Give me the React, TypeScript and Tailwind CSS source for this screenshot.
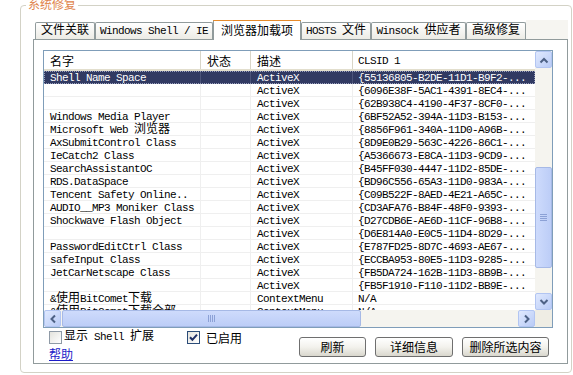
import React from "react";

const mono = "font-['Liberation_Mono','Noto_Sans_CJK_SC',monospace] text-[11px] tracking-[-0.6px]";
const cjk = "font-['Noto_Sans_CJK_SC',sans-serif] text-[12px] tracking-normal";

// 名字 / 描述 / CLSID
const rows: [string, string, string][] = [
  ["Shell Name Space", "ActiveX", "{55136805-B2DE-11D1-B9F2-..."],
  ["", "ActiveX", "{6096E38F-5AC1-4391-8EC4-..."],
  ["", "ActiveX", "{62B938C4-4190-4F37-8CF0-..."],
  ["Windows Media Player", "ActiveX", "{6BF52A52-394A-11D3-B153-..."],
  ["Microsoft Web 浏览器", "ActiveX", "{8856F961-340A-11D0-A96B-..."],
  ["AxSubmitControl Class", "ActiveX", "{8D9E0B29-563C-4226-86C1-..."],
  ["IeCatch2 Class", "ActiveX", "{A5366673-E8CA-11D3-9CD9-..."],
  ["SearchAssistantOC", "ActiveX", "{B45FF030-4447-11D2-85DE-..."],
  ["RDS.DataSpace", "ActiveX", "{BD96C556-65A3-11D0-983A-..."],
  ["Tencent Safety Online..", "ActiveX", "{C09B522F-8AED-4E21-A65C-..."],
  ["AUDIO__MP3 Moniker Class", "ActiveX", "{CD3AFA76-B84F-48F0-9393-..."],
  ["Shockwave Flash Object", "ActiveX", "{D27CDB6E-AE6D-11CF-96B8-..."],
  ["", "ActiveX", "{D6E814A0-E0C5-11D4-8D29-..."],
  ["PasswordEditCtrl Class", "ActiveX", "{E787FD25-8D7C-4693-AE67-..."],
  ["safeInput Class", "ActiveX", "{ECCBA953-80E5-11D3-9285-..."],
  ["JetCarNetscape Class", "ActiveX", "{FB5DA724-162B-11D3-8B9B-..."],
  ["", "ActiveX", "{FB5F1910-F110-11D2-BB9E-..."],
  ["&使用BitComet下载", "ContextMenu", "N/A"],
  ["&使用BitComet下载全部", "ContextMenu", "N/A"],
];

const tabs = [
  { label: "文件关联", w: "w-[60px]" },
  { label: "Windows Shell / IE", w: "w-[118px]" },
  { label: "浏览器加载项", w: "w-[88px]", active: true },
  { label: "HOSTS 文件", w: "w-[70px]" },
  { label: "Winsock 供应者", w: "w-[95px]" },
  { label: "高级修复", w: "w-[60px]" },
];

// 中文部分用 12px 字体，其余等宽
function Mixed({ text }: { text: string }) {
  const parts = text.split(/([\u3000-\u9fff\uff00-\uffef]+)/);
  return (
    <span className="whitespace-pre">
      {parts.map((p, i) =>
        i % 2 === 1 ? (
          <span key={i} className={`${cjk} leading-[8px]`}>
            {p}
          </span>
        ) : (
          <span key={i}>{p}</span>
        )
      )}
    </span>
  );
}

function Arrow({ dir }: { dir: "up" | "down" | "left" | "right" }) {
  const vert = dir === "up" || dir === "down";
  const d = {
    up: "M1.5 6.5 L5 3 L8.5 6.5",
    down: "M1.5 2 L5 5.5 L8.5 2",
    left: "M6 1.5 L2.5 5 L6 8.5",
    right: "M2 1.5 L5.5 5 L2 8.5",
  }[dir];
  return (
    <svg width={vert ? 10 : 8} height={vert ? 8 : 10} viewBox={vert ? "0 0 10 8" : "0 0 8 10"}>
      <path d={d} fill="none" stroke="#4D6185" strokeWidth="2" />
    </svg>
  );
}

function ScrollBtn({ dir }: { dir: "up" | "down" | "left" | "right" }) {
  return (
    <div className="w-[17px] h-[17px] shrink-0 rounded-[2px] border border-[#B2C5F2] bg-linear-to-br from-[#E0E9FE] to-[#B9CBF6] flex items-center justify-center">
      <Arrow dir={dir} />
    </div>
  );
}

function Checkbox({ checked }: { checked?: boolean }) {
  return (
    <div
      className={
        checked
          ? "w-[13px] h-[13px] shrink-0 border border-[#2B4C78] bg-linear-to-br from-[#E4E3DD] to-white flex items-center justify-center"
          : "w-[13px] h-[13px] shrink-0 border border-[#8F9AA6] bg-linear-to-br from-[#E4E3DD] to-white"
      }
    >
      {checked && (
        <svg width="9" height="9" viewBox="0 0 9 9">
          <path d="M1 4.2 L3.4 6.8 L8 1.6" fill="none" stroke="#1E2F66" strokeWidth="2" />
        </svg>
      )}
    </div>
  );
}

export default function App() {
  return (
    <div className="w-[573px] h-[375px] bg-white overflow-hidden pt-[5px] pl-[20px] text-black">
      {/* 系统修复 分组框 */}
      <div className="relative w-[552px] h-[368px] border border-[#D3D2C6] rounded-[4px] pt-[14px] pl-[12px]">
        <span className="absolute left-[5px] top-[-8px] px-[2px] bg-white leading-[12px] font-['Noto_Sans_CJK_SC',sans-serif] text-[12px] text-[#E0844C]">
          系统修复
        </span>

        <div className="w-[535px] flex flex-col">
          {/* 标签栏 */}
          <div className="h-[19px] flex items-end">
            <div className="w-[2px]" />
            {tabs.map((t) =>
              t.active ? (
                <div
                  key={t.label}
                  className={`${t.w} h-[20px] mb-[-1px] relative z-10 flex flex-col bg-white border-x border-[#919B9C]`}
                >
                  <div className="h-[3px] border-t border-[#E68B2C] bg-[#FFC83C] mx-[-1px] rounded-t-[2px]" />
                  <div className={`flex-1 flex items-center justify-center pb-[2px] ${cjk}`}>{t.label}</div>
                </div>
              ) : (
                <div
                  key={t.label}
                  className={`${t.w} h-[17px] flex items-center justify-center pt-[1px] border border-b-0 border-[#919B9C] rounded-t-[2px] bg-linear-to-b from-white to-[#ECEBE5] ${mono}`}
                >
                  <Mixed text={t.label} />
                </div>
              )
            )}
            <div className="flex-1 h-full bg-[#F6F5F1]" />
          </div>

          {/* 标签页 */}
          <div className="h-[325px] border border-[#919B9C] bg-white pl-[9px] pt-[10px]">
            {/* 列表 */}
            <div className="w-[510px] h-[278px] border border-[#7F9DB9] flex flex-col">
              <div className="h-[259px] flex">
                <div className={`w-[491px] h-full overflow-hidden flex flex-col bg-white ${mono}`}>
                  <div className="h-[20px] shrink-0 flex border-b-2 border-[#E2DECD]">
                    <div className={`w-[157px] pl-[6px] pt-[2px] flex items-center border-r border-[#D8D5C8] ${cjk}`}>名字</div>
                    <div className={`w-[50px] pl-[6px] pt-[2px] flex items-center border-r border-[#D8D5C8] ${cjk}`}>状态</div>
                    <div className={`w-[102px] pl-[6px] pt-[2px] flex items-center border-r border-[#D8D5C8] ${cjk}`}>描述</div>
                    <div className="flex-1 pl-[5px] pt-[2px] flex items-center">CLSID 1</div>
                  </div>
                  {rows.map((r, i) => {
                    const sel = i === 0;
                    return (
                      <div
                        key={i}
                        className={
                          sel
                            ? "h-[13px] shrink-0 flex leading-[14px] whitespace-nowrap bg-[#313A62] text-white border-b border-[#313A62] outline-1 outline-dotted outline-[#9AA0BE] -outline-offset-1"
                            : "h-[13px] shrink-0 flex leading-[14px] whitespace-nowrap border-b border-[#EFEFEF]"
                        }
                      >
                        <div className={sel ? "w-[157px] pl-[6px] border-r border-[#4B5379]" : "w-[157px] pl-[6px] border-r border-[#EFEFEF]"}>
                          <Mixed text={r[0]} />
                        </div>
                        <div className={sel ? "w-[50px] border-r border-[#4B5379]" : "w-[50px] border-r border-[#EFEFEF]"} />
                        <div className={sel ? "w-[102px] pl-[6px] border-r border-[#4B5379]" : "w-[102px] pl-[6px] border-r border-[#EFEFEF]"}>
                          {r[1]}
                        </div>
                        <div className="flex-1 pl-[5px]">{r[2]}</div>
                      </div>
                    );
                  })}
                </div>

                {/* 竖向滚动条 */}
                <div className="w-[17px] h-full flex flex-col bg-[#F5F4EF]">
                  <ScrollBtn dir="up" />
                  <div className="flex-1">
                    <div className="mt-[99px] h-[101px] rounded-[2px] border border-[#A6B9E6] bg-linear-to-r from-[#CEDBFC] to-[#BCCDF7] flex flex-col items-center justify-center gap-[1px]">
                      <div className="w-[7px] h-[1px] bg-[#8CA1D6]" />
                      <div className="w-[7px] h-[1px] bg-[#8CA1D6]" />
                      <div className="w-[7px] h-[1px] bg-[#8CA1D6]" />
                      <div className="w-[7px] h-[1px] bg-[#8CA1D6]" />
                    </div>
                  </div>
                  <ScrollBtn dir="down" />
                </div>
              </div>

              {/* 横向滚动条 */}
              <div className="h-[17px] flex">
                <div className="w-[491px] flex bg-[#F5F4EF]">
                  <ScrollBtn dir="left" />
                  <div className="flex-1 flex">
                    <div className="ml-[1px] w-[299px] h-full rounded-[2px] border border-[#A6B9E6] bg-linear-to-b from-[#CEDBFC] to-[#BCCDF7] flex items-center justify-center gap-[1px]">
                      <div className="w-[1px] h-[7px] bg-[#8CA1D6]" />
                      <div className="w-[1px] h-[7px] bg-[#8CA1D6]" />
                      <div className="w-[1px] h-[7px] bg-[#8CA1D6]" />
                      <div className="w-[1px] h-[7px] bg-[#8CA1D6]" />
                    </div>
                  </div>
                  <ScrollBtn dir="right" />
                </div>
                <div className="w-[17px] bg-[#EFEDE4]" />
              </div>
            </div>

            {/* 底部选项与按钮 */}
            <div className="flex mt-[3px]">
              <div className="w-[256px] pl-[6px] flex flex-col">
                <div className="h-[13px] flex items-center">
                  <div className="w-[138px] flex items-center gap-[2px]">
                    <Checkbox />
                    <span className={`leading-[13px] ${mono}`}>
                      <Mixed text="显示 Shell 扩展" />
                    </span>
                  </div>
                  <div className="flex items-center gap-[6px]">
                    <Checkbox checked />
                    <span className={`leading-[13px] ${cjk}`}>已启用</span>
                  </div>
                </div>
                <a className={`mt-[3px] leading-[13px] underline text-[#1C1CC8] w-fit ${cjk}`}>帮助</a>
              </div>
              <div className="mt-[6px] flex gap-[9px]">
                <button className={`w-[67px] h-[20px] rounded-[3px] border border-[#6F6F6F] bg-linear-to-b from-white via-[#F3F2ED] to-[#D9D7CD] ${cjk}`}>
                  刷新
                </button>
                <button className={`w-[78px] h-[20px] rounded-[3px] border border-[#6F6F6F] bg-linear-to-b from-white via-[#F3F2ED] to-[#D9D7CD] ${cjk}`}>
                  详细信息
                </button>
                <button className={`w-[87px] h-[20px] rounded-[3px] border border-[#6F6F6F] bg-linear-to-b from-white via-[#F3F2ED] to-[#D9D7CD] ${cjk}`}>
                  删除所选内容
                </button>
              </div>
            </div>
          </div>
        </div>
      </div>
    </div>
  );
}
